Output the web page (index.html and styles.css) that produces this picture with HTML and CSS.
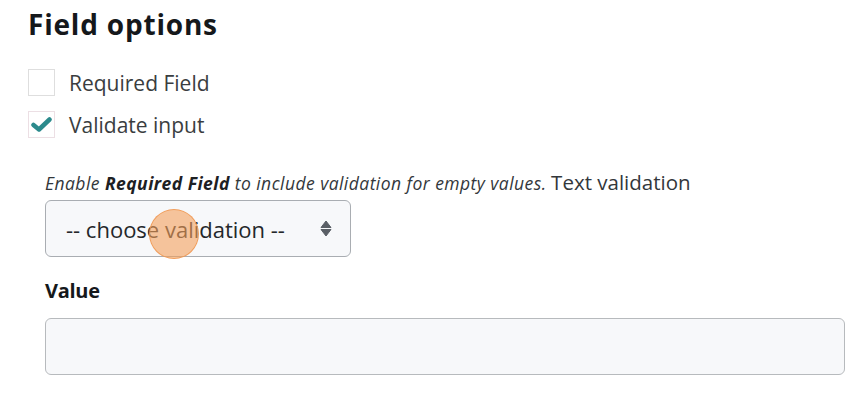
FILE: index.html
```html
<!DOCTYPE html>
<html>
<head>
	<title>Field options</title>
	<link rel="stylesheet" href="styles.css">
</head>
<body>
	<div class='page'>
		<h1 class='title'>Field options</h1>
		<div class='checks'>
			<label class='check'>
				<span class='box'></span>
				<span class='checklabel'>Required Field</span>
			</label>
			<label class='check'>
				<span class='box checked'>
					<svg width='21' height='17' viewBox='0 0 21 17'><path d='M2.5 9 L8 13.5 L18.5 3.5' fill='none' stroke='#2b8a8c' stroke-width='4.5' stroke-linecap='round' stroke-linejoin='round'/></svg>
				</span>
				<span class='checklabel'>Validate input</span>
			</label>
		</div>
		<div class='validation'>
			<p class='help'><i>Enable <b>Required Field</b> to include validation for empty values.</i> <span class='helptitle'>Text validation</span></p>
			<div class='selectwrap'>
				<div class='select'>
					<span>-- choose validation --</span>
					<svg width='12' height='17' viewBox='0 0 12 17'><path d='M6 1 L11 7.5 L1 7.5 Z M1 9.5 L11 9.5 L6 16 Z' fill='#5a5f66' stroke='#5a5f66' stroke-width='1' stroke-linejoin='round'/></svg>
				</div>
				<div class='clickdot'></div>
			</div>
			<div class='fieldlabel'>Value</div>
			<div class='textinput'></div>
		</div>
	</div>
</body>
</html>
```

FILE: styles.css
```css
body {
	margin: 0;
	background-color: white;
	font-family: "Open Sans", "Noto Sans", sans-serif;
	color: #2b2f33;
}
.page {
	padding: 9px 0 0 28px;
}
.title {
	margin: 0;
	font-size: 28px;
	line-height: 30px;
	font-weight: bold;
	color: #15181b;
	letter-spacing: 0.8px;
}
.checks {
	margin-top: 30px;
	display: flex;
	flex-direction: column;
	gap: 15px;
}
.check {
	display: flex;
	align-items: center;
	height: 27px;
}
.box {
	width: 25px;
	height: 25px;
	border: 1px solid #dedede;
	display: flex;
	align-items: center;
	justify-content: center;
}
.box.checked {
	border-color: #ecdfe4;
}
.checklabel {
	margin-left: 14px;
	font-size: 21px;
	color: #3a3d40;
}
.validation {
	margin-left: 17px;
}
.help {
	margin: 34px 0 0 0;
	font-size: 17.5px;
	line-height: 20px;
	color: #33373b;
}
.help i {
	letter-spacing: 0.45px;
}
.help b {
	color: #1d2023;
}
.helptitle {
	font-size: 20.5px;
}
.selectwrap {
	position: relative;
	margin-top: 7px;
	width: 306px;
}
.select {
	box-sizing: border-box;
	height: 57px;
	border: 1px solid #a9adb2;
	border-radius: 6px;
	background-color: #f7f8fa;
	display: flex;
	align-items: center;
	justify-content: space-between;
	padding: 0 18px 0 20px;
	font-size: 22px;
	color: #24272a;
}
.clickdot {
	position: absolute;
	left: 104px;
	top: 9px;
	width: 50px;
	height: 50px;
	border-radius: 50%;
	background-color: rgba(244, 160, 92, 0.6);
	border: 1.5px solid rgba(240, 150, 80, 0.85);
	box-sizing: border-box;
}
.fieldlabel {
	margin-top: 21px;
	font-size: 20px;
	font-weight: bold;
	line-height: 26px;
	color: #15181b;
	letter-spacing: -0.3px;
}
.textinput {
	margin-top: 14px;
	box-sizing: border-box;
	width: 800px;
	height: 57px;
	border: 1px solid #b7babd;
	border-radius: 6px;
	background-color: #f7f8fa;
}
```
